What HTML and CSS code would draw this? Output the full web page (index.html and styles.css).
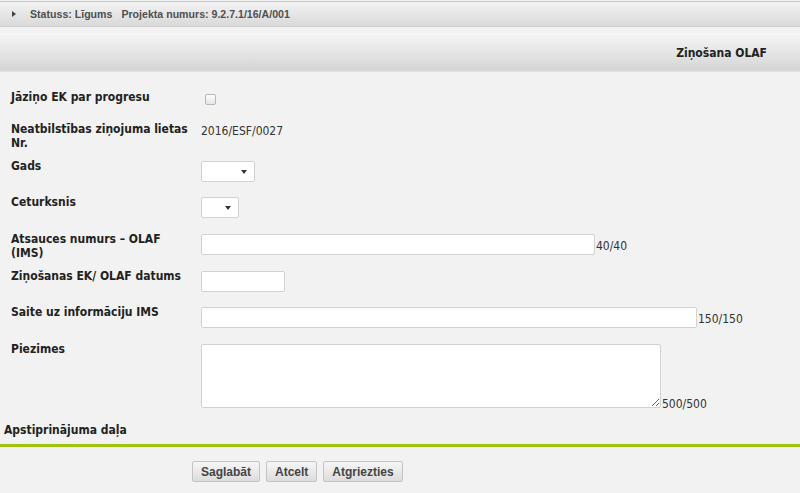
FILE: index.html
```html
<!DOCTYPE html>
<html lang="lv">
<head>
  <meta charset="UTF-8">
  <title>Ziņošana OLAF</title>
  <link rel="stylesheet" href="styles.css">
</head>
<body>

<div class="status-bar">
  <span class="arrow"></span>
  <span class="status-item">Statuss: Līgums</span>
  <span class="status-item">Projekta numurs: 9.2.7.1/16/A/001</span>
</div>

<div class="page-header">
  <h1>Ziņošana OLAF</h1>
</div>

<form class="form">
  <div class="row row-first">
    <label class="label">Jāziņo EK par progresu</label>
    <div class="field"><input type="checkbox" class="check"></div>
  </div>
  <div class="row">
    <label class="label">Neatbilstības ziņojuma lietas Nr.</label>
    <div class="field value">2016/ESF/0027</div>
  </div>
  <div class="row">
    <label class="label">Gads</label>
    <div class="field"><div class="select select-year"><span class="caret"></span></div></div>
  </div>
  <div class="row">
    <label class="label">Ceturksnis</label>
    <div class="field"><div class="select select-quarter"><span class="caret"></span></div></div>
  </div>
  <div class="row">
    <label class="label">Atsauces numurs – OLAF (IMS)</label>
    <div class="field"><input type="text" class="input input-ref"><span class="count">40/40</span></div>
  </div>
  <div class="row">
    <label class="label">Ziņošanas EK/ OLAF datums</label>
    <div class="field"><input type="text" class="input input-date"></div>
  </div>
  <div class="row">
    <label class="label">Saite uz informāciju IMS</label>
    <div class="field"><input type="text" class="input input-link"><span class="count">150/150</span></div>
  </div>
  <div class="row row-notes">
    <label class="label">Piezimes</label>
    <div class="field"><textarea class="notes"></textarea><span class="count">500/500</span></div>
  </div>

  <div class="section-title">Apstiprinājuma daļa</div>
</form>

<div class="actions">
  <button type="button" class="btn">Saglabāt</button>
  <button type="button" class="btn">Atcelt</button>
  <button type="button" class="btn">Atgriezties</button>
</div>

</body>
</html>
```

FILE: styles.css
```css
body {
  margin: 0;
  background-color: #f2f2f2;
  font-family: "DejaVu Sans Condensed", "DejaVu Sans", Verdana, sans-serif;
  font-size: 12px;
  color: #222;
}
.status-bar {
  margin-top: 1px;
  height: 24px;
  border-top: 1px solid #c6c6c6;
  border-bottom: 1px solid #cfcfcf;
  background: linear-gradient(#f3f3f3, #d9d9d9);
  display: flex;
  align-items: center;
  padding-left: 12px;
  font-family: "Liberation Sans", Arial, sans-serif;
  font-size: 10.6px;
  font-weight: bold;
  color: #4f4f4f;
}
.arrow {
  width: 0;
  height: 0;
  border-top: 3px solid transparent;
  border-bottom: 3px solid transparent;
  border-left: 4px solid #444;
  margin-right: 14px;
}
.status-item {
  margin-right: 9px;
}
.page-header {
  margin-top: 7px;
  border-top: 1px solid #f8f8f8;
  height: 36px;
  background: linear-gradient(#f4f4f4, #d5d5d5);
  border-bottom: 1px solid #e2e2e2;
  display: flex;
  align-items: center;
  justify-content: flex-end;
  padding-right: 33px;
}
.page-header h1 {
  margin: 0;
  font-size: 12px;
  font-weight: bold;
  color: #222;
}
.form {
  padding-top: 18px;
}
.row {
  display: flex;
  align-items: flex-start;
  min-height: 36.7px;
}
.row-first {
  min-height: 32px;
}
.label {
  width: 201px;
  padding: 0 8px 0 11px;
  box-sizing: border-box;
  font-weight: bold;
  line-height: 14px;
  color: #222;
}
.field {
  display: flex;
  align-items: flex-end;
  margin-top: 2px;
}
.value {
  line-height: 14px;
  color: #333;
}
.check {
  appearance: none;
  -webkit-appearance: none;
  margin: 2px 0 0 4px;
  width: 11px;
  height: 11px;
  border: 1px solid #b8b8b8;
  border-radius: 2px;
  background: linear-gradient(#fdfdfd, #e6e6e6);
}
.select {
  position: relative;
  height: 19px;
  background: #fff;
  border: 1px solid #d2d2d2;
  border-radius: 2px;
}
.select-year {
  width: 52px;
}
.select-quarter {
  width: 36px;
}
.caret {
  position: absolute;
  right: 7px;
  top: 8px;
  border-left: 3px solid transparent;
  border-right: 3px solid transparent;
  border-top: 4px solid #333;
}
.input {
  height: 21px;
  box-sizing: border-box;
  border: 1px solid #d2d2d2;
  border-radius: 2px;
  background: #fff;
  margin: 0;
  padding: 0 4px;
}
.input-ref {
  width: 394px;
}
.input-date {
  width: 84px;
}
.input-link {
  width: 496px;
}
.count {
  line-height: 14px;
  color: #333;
  margin-left: 1px;
  margin-bottom: 2px;
}
.notes {
  width: 460px;
  height: 64px;
  box-sizing: border-box;
  border: 1px solid #d2d2d2;
  border-radius: 2px;
  background: #fff;
  margin: 0;
  display: block;
}
.row-notes .count {
  margin-bottom: -3px;
}
.section-title {
  margin-top: 15px;
  padding-left: 4px;
  font-weight: bold;
  line-height: 14px;
  padding-bottom: 7px;
  border-bottom: 3px solid #9fc30e;
}
.actions {
  display: flex;
  gap: 6px;
  padding: 14px 0 0 192px;
}
.btn {
  height: 21px;
  padding: 0 8px;
  font-family: "Liberation Sans", Arial, sans-serif;
  font-size: 12px;
  font-weight: bold;
  color: #444;
  background: linear-gradient(#f6f6f6, #dcdcdc);
  border: 1px solid #c4c4c4;
  border-radius: 2px;
}
```
